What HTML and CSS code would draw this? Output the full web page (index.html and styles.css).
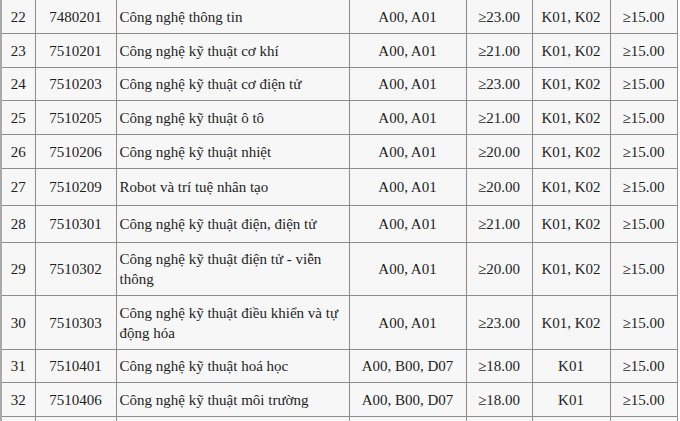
FILE: index.html
```html
<!DOCTYPE html>
<html>
<head>
<meta charset="utf-8">
<link rel="stylesheet" href="styles.css">
</head>
<body>
<table class="tbl">
  <colgroup>
    <col class="c1"><col class="c2"><col class="c3"><col class="c4"><col class="c5"><col class="c6"><col class="c7">
  </colgroup>
  <tbody>
    <tr><td class="ctr">22</td><td class="ctr">7480201</td><td>Công nghệ thông tin</td><td class="ctr">A00, A01</td><td class="ctr">≥23.00</td><td class="ctr">K01, K02</td><td class="ctr">≥15.00</td></tr>
    <tr><td class="ctr">23</td><td class="ctr">7510201</td><td>Công nghệ kỹ thuật cơ khí</td><td class="ctr">A00, A01</td><td class="ctr">≥21.00</td><td class="ctr">K01, K02</td><td class="ctr">≥15.00</td></tr>
    <tr class="tight"><td class="ctr">24</td><td class="ctr">7510203</td><td>Công nghệ kỹ thuật cơ điện tử</td><td class="ctr">A00, A01</td><td class="ctr">≥23.00</td><td class="ctr">K01, K02</td><td class="ctr">≥15.00</td></tr>
    <tr><td class="ctr">25</td><td class="ctr">7510205</td><td>Công nghệ kỹ thuật ô tô</td><td class="ctr">A00, A01</td><td class="ctr">≥21.00</td><td class="ctr">K01, K02</td><td class="ctr">≥15.00</td></tr>
    <tr><td class="ctr">26</td><td class="ctr">7510206</td><td>Công nghệ kỹ thuật nhiệt</td><td class="ctr">A00, A01</td><td class="ctr">≥20.00</td><td class="ctr">K01, K02</td><td class="ctr">≥15.00</td></tr>
    <tr class="tall"><td class="ctr">27</td><td class="ctr">7510209</td><td>Robot và trí tuệ nhân tạo</td><td class="ctr">A00, A01</td><td class="ctr">≥20.00</td><td class="ctr">K01, K02</td><td class="ctr">≥15.00</td></tr>
    <tr class="tall"><td class="ctr">28</td><td class="ctr">7510301</td><td>Công nghệ kỹ thuật điện, điện tử</td><td class="ctr">A00, A01</td><td class="ctr">≥21.00</td><td class="ctr">K01, K02</td><td class="ctr">≥15.00</td></tr>
    <tr class="tight"><td class="ctr">29</td><td class="ctr">7510302</td><td>Công nghệ kỹ thuật điện tử - viễn thông</td><td class="ctr">A00, A01</td><td class="ctr">≥20.00</td><td class="ctr">K01, K02</td><td class="ctr">≥15.00</td></tr>
    <tr><td class="ctr">30</td><td class="ctr">7510303</td><td>Công nghệ kỹ thuật điều khiển và tự động hóa</td><td class="ctr">A00, A01</td><td class="ctr">≥23.00</td><td class="ctr">K01, K02</td><td class="ctr">≥15.00</td></tr>
    <tr class="tight"><td class="ctr">31</td><td class="ctr">7510401</td><td>Công nghệ kỹ thuật hoá học</td><td class="ctr">A00, B00, D07</td><td class="ctr">≥18.00</td><td class="ctr">K01</td><td class="ctr">≥15.00</td></tr>
    <tr><td class="ctr">32</td><td class="ctr">7510406</td><td>Công nghệ kỹ thuật môi trường</td><td class="ctr">A00, B00, D07</td><td class="ctr">≥18.00</td><td class="ctr">K01</td><td class="ctr">≥15.00</td></tr>
    <tr class="stub"><td></td><td></td><td></td><td></td><td></td><td></td><td></td></tr>
  </tbody>
</table>
</body>
</html>
```

FILE: styles.css
```css
html, body {
  margin: 0;
  padding: 0;
  background: #ffffff;
}
.tbl {
  margin-top: -1px;
  border-collapse: collapse;
  table-layout: fixed;
  width: 677px;
  font-family: 'Liberation Serif', 'Nimbus Roman', 'Nimbus Roman No9 L', FreeSerif, 'Times New Roman', Times, 'Noto Serif', 'DejaVu Serif', serif;
  font-size: 15px;
  line-height: 20px;
  color: #1e1e1e;
  background: #f7f7f7;
  border-left: 2px solid #a8a8a8;
}
.c1 { width: 34px; }
.c2 { width: 81px; }
.c3 { width: 233px; }
.c4 { width: 117px; }
.c5 { width: 66px; }
.c6 { width: 78px; }
.c7 { width: 67px; }
.tbl td {
  border: 1px solid #8c8c8c;
  padding: 7px 3px 6px 3px;
  vertical-align: middle;
  text-align: left;
}
.tbl td.ctr {
  text-align: center;
}
.tbl tr.tight td {
  padding-top: 6px;
  padding-bottom: 6px;
}
.tbl tr.tall td {
  padding-top: 8px;
  padding-bottom: 8px;
}
.tbl tr.stub td {
  height: 10px;
  padding: 0;
}
```
